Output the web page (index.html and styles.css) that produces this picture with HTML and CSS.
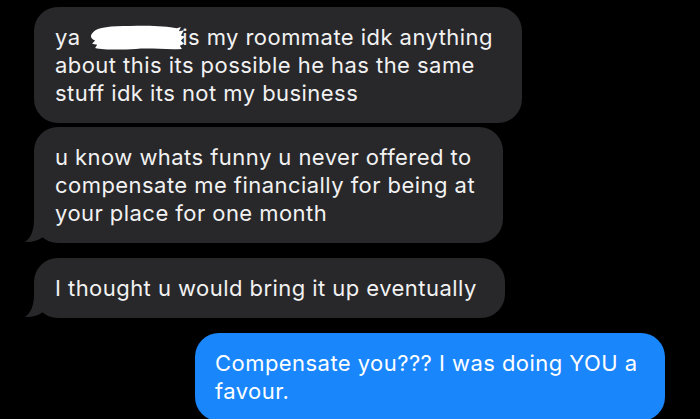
FILE: index.html
```html
<!DOCTYPE html>
<html>
<head>
<meta charset="utf-8">
<link rel="stylesheet" href="styles.css">
</head>
<body>
<div class="thread">
  <div class="bubble in b1">ya <span class="redact"><svg width="96" height="27" viewBox="0 0 94 26" preserveAspectRatio="none"><path d="M4 8 C8 3 22 2 40 2 C58 1 76 2 86 4 L90 3 L88 7 L93 6 L90 11 L94 12 L90 16 L93 19 L89 21 L91 24 C78 25 60 23 46 24 C30 25 14 25 6 23 L8 20 L3 19 L6 16 C1 14 1 11 4 8 Z" fill="#fff"/></svg></span>is my roommate idk anything<br>about this its possible he has the same<br>stuff idk its not my business</div>
  <div class="bubble in b2 tight">u know whats funny u never offered to<br>compensate me financially for being at<br>your place for one month<svg class="tail" width="28" height="24" viewBox="0 0 28 24"><path d="M14 0 C14 11 11 19 5 23 C11 23.5 18 22 23 18 L23 0 Z" fill="#28282b"/></svg></div>
  <div class="bubble in b3">I thought u would bring it up eventually<svg class="tail" width="28" height="24" viewBox="0 0 28 24"><path d="M14 0 C14 11 11 19 5 23 C11 23.5 18 22 23 18 L23 0 Z" fill="#28282b"/></svg></div>
  <div class="bubble out b4">Compensate you??? I was doing YOU a<br>favour.</div>
</div>
</body>
</html>
```

FILE: styles.css
```css
html, body {
  margin: 0;
  padding: 0;
  background: #000;
  overflow: hidden;
}

.thread {
  display: flex;
  flex-direction: column;
  align-items: flex-start;
  padding-top: 7px;
  font-family: "Inter", "Liberation Sans", sans-serif;
  font-size: 22px;
  letter-spacing: 0.45px;
  line-height: 28px;
  color: #f2f2f2;
}

.bubble {
  position: relative;
  box-sizing: border-box;
  padding: 16px 0 16px 21px;
  border-radius: 24px;
  white-space: nowrap;
  margin-top: 15px;
}

.bubble.in {
  background: #28282b;
  margin-left: 34px;
  z-index: 0;
}

.bubble.tight {
  margin-top: 4px;
}

.b1 { margin-top: 0; width: 488px; }
.b2 { width: 469px; }
.b3 { width: 471px; }

.bubble.out {
  background: #1a86fc;
  color: #fff;
  align-self: flex-end;
  margin-right: 35px;
  width: 470px;
  padding-left: 20px;
}

.redact {
  display: inline-block;
  width: 93px;
  height: 27px;
  margin-left: 2px;
  vertical-align: -6px;
}

.redact svg {
  display: block;
}

.tail {
  position: absolute;
  left: -14px;
  bottom: 0;
  z-index: -1;
}
```
